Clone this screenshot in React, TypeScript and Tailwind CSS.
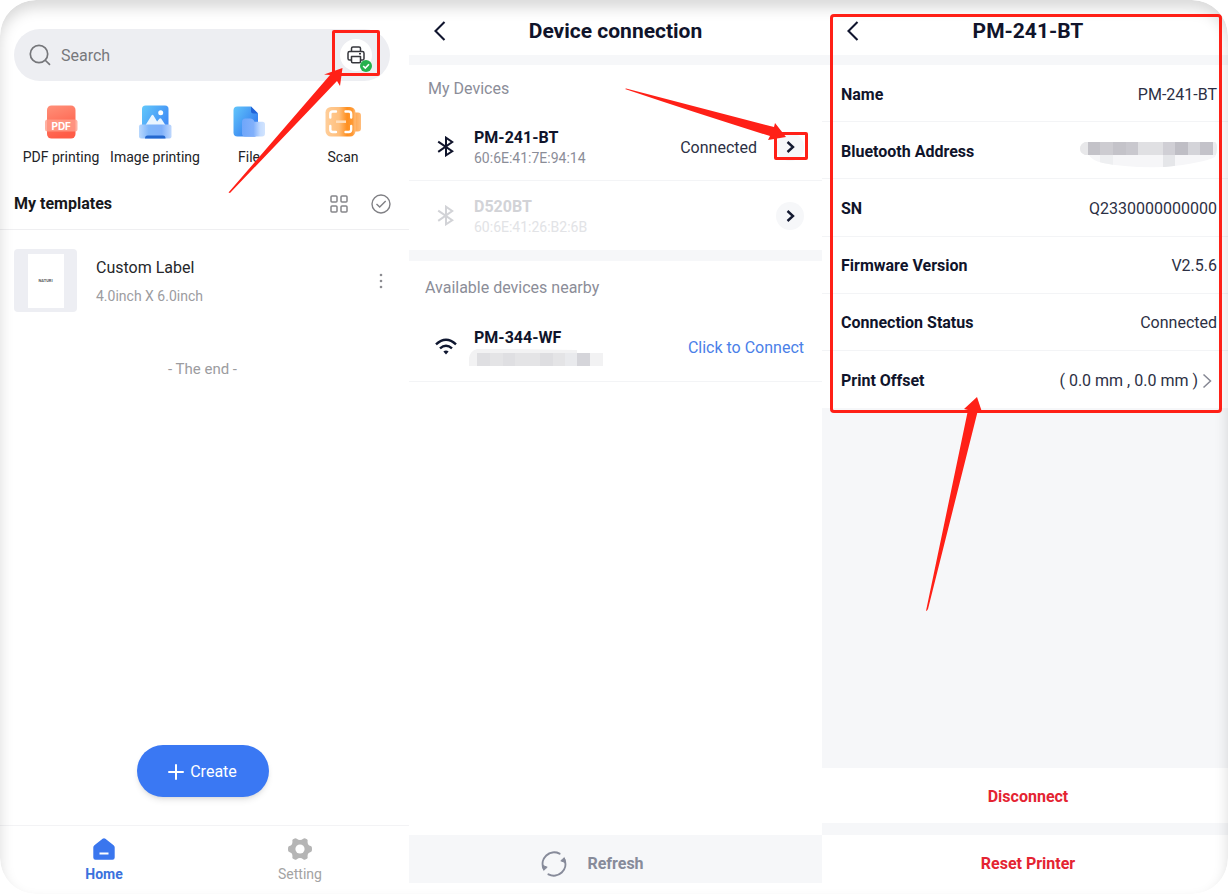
import { useState } from 'react';
import type { ReactNode } from 'react';

const details = [
  { label: 'Name', value: 'PM-241-BT' },
  { label: 'Bluetooth Address', value: null },
  { label: 'SN', value: 'Q2330000000000' },
  { label: 'Firmware Version', value: 'V2.5.6' },
  { label: 'Connection Status', value: 'Connected' },
];

function SearchIcon() {
  return (
    <svg width="22" height="22" viewBox="0 0 22 22" fill="none" stroke="#75767a" strokeWidth="1.7">
      <circle cx="10" cy="10" r="8.7" />
      <path d="m16.5 16.5 4 3.8" strokeLinecap="round" />
    </svg>
  );
}

function PrinterIcon() {
  return (
    <svg width="18" height="18" viewBox="0 0 18 18" fill="none" stroke="#36373c" strokeWidth="1.5" strokeLinejoin="round">
      <path d="M4.5 5.5V2.6Q4.5 1 6 1h6q1.5 0 1.5 1.6v2.9" />
      <path d="M4.5 14H2.6Q1 14 1 12.400V7.2Q1 5.5 2.7 5.5h12.600Q17 5.5 17 7.2v5.2q0 1.6-1.6 1.6h-1.9" />
      <path d="M4.5 10.5h9v5q0 1.200-1.200 1.200H5.700q-1.200 0-1.200-1.200z" />
      <path d="M12 7.800h2" />
    </svg>
  );
}

function CheckBadge() {
  return (
    <svg width="12" height="12" viewBox="0 0 12 12" fill="none">
      <circle cx="6" cy="6" r="6" fill="#26b14c" />
      <path d="m3.2 6 2.1 2.1 3.700-3.900" stroke="#fff" strokeWidth="1.6" />
    </svg>
  );
}

function PdfIcon() {
  return (
    <svg width="34" height="34" viewBox="0 0 34 34">
      <defs>
        <linearGradient id="pdf" x1="0" y1="0" x2="0.3" y2="1">
          <stop offset="0" stopColor="#ff9079" />
          <stop offset="1" stopColor="#ff5c47" />
        </linearGradient>
      </defs>
      <rect x="3" y="0.5" width="28.5" height="33" rx="4.5" fill="url(#pdf)" />
      <rect x="1" y="14.5" width="32.5" height="12" rx="2.5" fill="#ff9e8b" fillOpacity="0.8" />
      <text x="17.2" y="24.5" textAnchor="middle" fontFamily="Inter, sans-serif" fontWeight="700" fontSize="10" fill="#fff">
        PDF
      </text>
    </svg>
  );
}

function ImageIcon() {
  return (
    <svg width="34" height="34" viewBox="0 0 34 34">
      <defs>
        <linearGradient id="img" x1="0" y1="0" x2="1" y2="0.7">
          <stop offset="0" stopColor="#62c8fb" />
          <stop offset="1" stopColor="#3d86f4" />
        </linearGradient>
        <linearGradient id="tray" x1="0" y1="0" x2="1" y2="0">
          <stop offset="0" stopColor="#b9d8fd" />
          <stop offset="0.3" stopColor="#7fb6fa" />
          <stop offset="0.7" stopColor="#7fb0fa" />
          <stop offset="1" stopColor="#bfd8fd" />
        </linearGradient>
      </defs>
      <rect x="4" y="0.5" width="26.5" height="31" rx="3.5" fill="url(#img)" />
      <path d="m7 21 6.5-10.5q1-1.3 2 0l3.6 6 2.2-2.7q1-1 2 0L28 21z" fill="#e9f5ff" />
      <circle cx="22.7" cy="7.7" r="2.5" fill="#fff" />
      <path d="M1 21.5q0-2 2-2h28q2.5 0 2.5 2v10q0 2-2 2H3q-2 0-2-2z" fill="url(#tray)" />
      <path d="M7 33.5q0-3 2.5-3h15.5q2.5 0 2.5 3z" fill="#2468cf" />
    </svg>
  );
}

function FileIcon() {
  return (
    <svg width="34" height="34" viewBox="0 0 34 34">
      <defs>
        <linearGradient id="file" x1="0" y1="0" x2="1" y2="0.8">
          <stop offset="0" stopColor="#62c6fb" />
          <stop offset="1" stopColor="#2f74ee" />
        </linearGradient>
        <linearGradient id="folder" x1="0" y1="0" x2="1" y2="0">
          <stop offset="0" stopColor="#6fa6fa" />
          <stop offset="0.5" stopColor="#81b0fb" />
          <stop offset="0.8" stopColor="#c5dcfe" />
          <stop offset="1" stopColor="#d2e4fe" />
        </linearGradient>
      </defs>
      <path d="M1.5 5.5q0-4 4-4H19l7 7v19q0 4-4 4H5.5q-4 0-4-4z" fill="url(#file)" />
      <path d="M19 1.5v4.5q0 2.500 2.500 2.500H26z" fill="#2263d8" />
      <path d="M10 17q0-3.500 3.500-3.500h5q2 0 3 1.500l1 1.700h8q2.500 0 2.500 2.500v9.300q0 3-3 3H13q-3 0-3-3z" fill="url(#folder)" />
    </svg>
  );
}

function ScanIcon() {
  return (
    <svg width="36" height="34" viewBox="0 0 36 34">
      <defs>
        <linearGradient id="scan" x1="0" y1="0" x2="1" y2="0">
          <stop offset="0" stopColor="#ffce9a" />
          <stop offset="0.45" stopColor="#ffbf7c" />
          <stop offset="0.72" stopColor="#ff8f1f" />
          <stop offset="0.9" stopColor="#ff9a35" />
          <stop offset="1" stopColor="#ffbe7d" />
        </linearGradient>
        <linearGradient id="scanTab" x1="0" y1="0" x2="1" y2="0">
          <stop offset="0" stopColor="#ff8c1c" />
          <stop offset="1" stopColor="#ffbd7c" />
        </linearGradient>
      </defs>
      <rect x="22" y="7.5" width="14" height="19" rx="3" fill="url(#scanTab)" />
      <rect x="0.5" y="2" width="30" height="29.5" rx="5.5" fill="url(#scan)" />
      <g fill="none" stroke="#fff" strokeWidth="2.4" strokeLinecap="round">
        <path d="M5.3 12.500V9q0-2.500 2.500-2.500H11M20.500 6.500h3.200q2.500 0 2.500 2.500v3.500M26.200 21v3.500q0 2.500-2.500 2.500h-3.200M11 27H7.800q-2.500 0-2.500-2.500V21" />
      </g>
      <path d="M11 16.700h10" stroke="#ffdfbd" strokeWidth="2.5" />
    </svg>
  );
}

function GridIcon() {
  return (
    <svg width="18" height="18" viewBox="0 0 18 18" fill="none" stroke="#86868a" strokeWidth="1.5">
      <rect x="1" y="1" width="6" height="6" rx="1" />
      <rect x="11" y="1" width="6" height="6" rx="1" />
      <rect x="1" y="11" width="6" height="6" rx="1" />
      <rect x="11" y="11" width="6" height="6" rx="1" />
    </svg>
  );
}

function SelectIcon() {
  return (
    <svg width="20" height="20" viewBox="0 0 20 20" fill="none" stroke="#808085" strokeWidth="1.4">
      <circle cx="10" cy="10" r="9" />
      <path d="m5.5 10 3.2 3 6-6" />
    </svg>
  );
}

function BluetoothIcon() {
  return (
    <svg width="17" height="21" viewBox="0 0 17 21" fill="none" stroke="currentColor" strokeWidth="2">
      <path d="m1.200 5.600 14 9.700L9 19.300V1.700l6.200 4.300L1.200 15.900" />
    </svg>
  );
}

function WifiIcon() {
  return (
    <svg width="22" height="17" viewBox="0 0 22 17" fill="none" stroke="#0f1730">
      <path d="M1 6.300Q11-3 21 6.300" strokeWidth="2.4" />
      <path d="M5 10.400q6-5.400 12 0" strokeWidth="2.4" />
      <path d="M8.400 13.600q2.600-2 5.200 0L11 16.600z" fill="#0f1730" stroke="none" />
    </svg>
  );
}

function BackIcon() {
  return (
    <svg width="12" height="20" viewBox="0 0 12 20" fill="none" stroke="#10152e" strokeWidth="2.1">
      <path d="m10.5 1-9 9 9 9" />
    </svg>
  );
}

function ChevronIcon() {
  return (
    <svg width="9" height="12" viewBox="0 0 9 12" fill="none" stroke="#141a31" strokeWidth="2.4">
      <path d="m1.5 1 5.5 5-5.5 5" />
    </svg>
  );
}

function HomeIcon() {
  return (
    <svg width="22" height="22" viewBox="0 0 22 22">
      <path d="M9.600.8q1.400-1.200 2.800 0l8.200 6.500q1.100.9 1.100 2.200v10q0 2.200-2.200 2.200H2.500Q.3 21.700.3 19.500v-10q0-1.300 1.100-2.200z" fill="#3a76ee" />
      <path d="M6.500 15.500h9" stroke="#fff" strokeWidth="2.2" />
    </svg>
  );
}

function GearIcon() {
  return (
    <svg width="24" height="22" viewBox="0 0 24 22">
      <path
        d="M6.600.4q1.200-.6 2.200.4 1.500 1.200 3.200 1.200t3.200-1.200q1-1 2.200-.4l1.500.8q1 .6.700 1.900-.2 2 .6 3.300.8 1.200 2.500 1.700 1 .3 1.200 1.400l.1 1.500-.1 1.500q-.2 1.100-1.200 1.400-1.700.5-2.500 1.700-.8 1.300-.6 3.300.3 1.300-.7 1.900l-1.500.8q-1.200.6-2.200-.4-1.500-1.200-3.200-1.200t-3.200 1.200q-1 1-2.200.4l-1.500-.8q-1-.6-.7-1.900.2-2-.6-3.300-.8-1.200-2.500-1.700-1-.3-1.200-1.400L0 11l.1-1.500q.2-1.100 1.200-1.400Q3 7.600 3.800 6.400q.8-1.300.6-3.300-.3-1.300.7-1.900z"
        fill="#b5b5b5"
      />
      <circle cx="12" cy="11" r="4.6" fill="#fff" />
    </svg>
  );
}

function RefreshIcon() {
  return (
    <svg width="26" height="26" viewBox="0 0 26 26" fill="none" stroke="#878b9a" strokeWidth="2" strokeLinecap="round">
      <path d="M18.500 2.700A11.500 11.500 0 0 0 2.600 17.500" />
      <path d="M7.500 23.300A11.500 11.500 0 0 0 23.400 8.500" />
      <path d="m1.900 14.500 4.300 1.700-3.200 2.900zM24.100 11.500l-4.300-1.700L23 6.900z" fill="#878b9a" strokeWidth="1" strokeLinejoin="round" />
    </svg>
  );
}

// address hidden behind a mosaic
function AddressMosaic() {
  return (
    <svg className="mt-1.5" width="137" height="26" viewBox="0 0 137 26" role="img" aria-label="Hidden Bluetooth address">
      <defs>
        <clipPath id="addressShape">
          <path d="M5 0h130q2 1 2 6t-2 9q-12 6-50 10-40 1-62-4-12-3-14-8H5q-5-2-5-6.500T5 0z" />
        </clipPath>
      </defs>
      <g clipPath="url(#addressShape)">
        <rect width="137" height="26" fill="#f6f6f8" />
        <rect width="8" height="13" fill="#e8e8ea" />
        <rect x="8" width="12" height="13" fill="#c3c2c8" />
        <rect x="20" width="13" height="13" fill="#cdccd1" />
        <rect x="33" width="13" height="13" fill="#c4c3c9" />
        <rect x="46" width="12" height="13" fill="#c9c8ce" />
        <rect x="58" width="25" height="13" fill="#e0e0e3" />
        <rect x="83" width="12" height="13" fill="#d0cfd5" />
        <rect x="95" width="13" height="13" fill="#bfbec5" />
        <rect x="108" width="12" height="13" fill="#d4d4d9" />
        <rect x="120" width="13" height="13" fill="#c3c2c9" />
        <rect x="133" width="4" height="13" fill="#ececee" />
        <rect x="20" y="13" width="13" height="13" fill="#eeeff1" />
        <rect x="83" y="13" width="12" height="13" fill="#e5e6e9" />
      </g>
    </svg>
  );
}

function NearbyMosaic() {
  return (
    <svg width="134" height="18" viewBox="0 0 134 18" role="img" aria-label="Hidden device address">
      <path d="M0 18V10q1-7 8-9h26l74 1v3h26v13z" fill="#f2f2f3" />
      <path d="M8 5h100v13H8z" fill="#e4e4e6" />
      <path d="M8 5h13v13H8zM34 5h12v13H34z" fill="#dfdfe2" />
      <path d="M71 5h13v13H71z" fill="#dedee1" />
      <path d="M96 5h12v13H96z" fill="#e9eaed" />
      <path d="M108 5h13v13h-13z" fill="#d5d5da" />
    </svg>
  );
}

function Shortcut({ icon, label }: { icon: ReactNode; label: string }) {
  return (
    <button type="button" className="flex flex-col items-center gap-1.5 whitespace-nowrap text-sm leading-6 text-[#222327]">
      {icon}
      {label}
    </button>
  );
}

function ScreenHeader({ title, titleClass = '' }: { title: string; titleClass?: string }) {
  return (
    <header className="grid h-[65px] shrink-0 grid-cols-[37px_1fr_37px] items-center border-b-[10px] border-[#f6f7f9] pt-1.5">
      <button type="button" aria-label="Back" className="flex justify-end">
        <BackIcon />
      </button>
      <h1 className={`text-center text-[21px] font-bold leading-7 text-[#10142b] ${titleClass}`}>{title}</h1>
    </header>
  );
}

function HomeScreen() {
  const [query, setQuery] = useState('');

  return (
    <section className="flex flex-col">
      <div className="relative ml-3.5 mr-[19px] mt-[29px] flex h-[52px] items-center gap-2.5 rounded-full bg-[#edeef2] pl-[15px] pr-[18px]">
        <SearchIcon />
        <input
          type="search"
          aria-label="Search"
          placeholder="Search"
          className="min-w-0 flex-1 bg-transparent pt-0.5 text-base text-[#222327] outline-none placeholder:text-[#77787c]"
          value={query}
          onChange={(e) => setQuery(e.target.value)}
        />
        <button type="button" aria-label="Printer" className="relative flex size-8 items-center justify-center rounded-full bg-white">
          <PrinterIcon />
          <span className="absolute -bottom-px right-0">
            <CheckBadge />
          </span>
        </button>
        <span className="pointer-events-none absolute right-2.5 top-px h-[46px] w-12 rounded-xs border-[3px] border-[#ff2017]" />
        <svg className="pointer-events-none absolute right-[47px] top-[38px] z-10" width="115" height="127" viewBox="0 0 115 127" fill="#ff2017">
          <path d="M.5 125.500 102 8l-6-.500L114.500 1 112 19l-3-5L2 126z" />
        </svg>
      </div>

      <div className="ml-3.5 mr-[19px] mt-6 grid grid-cols-4">
        <Shortcut icon={<PdfIcon />} label="PDF printing" />
        <Shortcut icon={<ImageIcon />} label="Image printing" />
        <Shortcut icon={<FileIcon />} label="File" />
        <Shortcut icon={<ScanIcon />} label="Scan" />
      </div>

      <div className="flex h-[61px] items-center gap-[23px] border-b border-[#efeff1] pl-3.5 pr-[18px] pt-2.5">
        <h2 className="flex-1 text-base font-bold text-[#17181b]">My templates</h2>
        <button type="button" aria-label="Grid view">
          <GridIcon />
        </button>
        <button type="button" aria-label="Select templates">
          <SelectIcon />
        </button>
      </div>

      <div className="mt-[19px] flex items-center pl-3.5 pr-6">
        <div className="flex size-[63px] items-center justify-center rounded bg-[#edeef3]">
          <div className="flex h-[54px] w-9 items-center justify-center bg-white text-[4px] font-bold text-[#55565a]">NATURI</div>
        </div>
        <div className="ml-[19px] flex-1 pt-0.5">
          <h3 className="text-base leading-7 text-[#26272a]">Custom Label</h3>
          <p className="text-sm leading-7 text-[#9c9c9f]">4.0inch X 6.0inch</p>
        </div>
        <button type="button" aria-label="More options">
          <svg width="8" height="16" viewBox="0 0 8 16" fill="#8c8c91">
            <circle cx="4" cy="2" r="1.3" />
            <circle cx="4" cy="8" r="1.3" />
            <circle cx="4" cy="14" r="1.3" />
          </svg>
        </button>
      </div>

      <p className="mr-1 mt-[45px] text-center text-[15px] leading-6 text-[#9c9c9f]">- The end -</p>

      <button
        type="button"
        className="mb-7 mr-1 mt-auto flex h-[52px] w-[132px] items-center justify-center gap-1.5 self-center rounded-full bg-[#3a78f3] pt-0.5 text-base text-white shadow-md"
      >
        <svg width="16" height="16" viewBox="0 0 16 16" stroke="currentColor" strokeWidth="2" strokeLinecap="round">
          <path d="M8 1v14M1 8h14" />
        </svg>
        Create
      </button>

      <nav className="grid h-[69px] grid-cols-2 border-t border-[#f3f3f5] pl-1.5 pr-[11px] pt-3 text-sm">
        <a href="#home" className="flex flex-col items-center gap-1 font-bold text-[#3b72dd]">
          <HomeIcon />
          Home
        </a>
        <a href="#setting" className="flex flex-col items-center gap-1 text-[#a3a3a3]">
          <GearIcon />
          Setting
        </a>
      </nav>
    </section>
  );
}

function ConnectionScreen() {
  return (
    <section className="flex flex-col">
      <ScreenHeader title="Device connection" />

      <h2 className="mt-3 pl-[19px] text-base leading-6 text-[#8b8d98]">My Devices</h2>
      <ul>
        <li className="mt-3 flex h-[68px] items-center border-b border-[#f3f4f6] pl-7 pr-[18px] text-[#10142b]">
          <BluetoothIcon />
          <div className="ml-5 flex-1 pt-[3px]">
            <h3 className="text-base font-bold leading-5">PM-241-BT</h3>
            <p className="text-sm leading-5 text-[#8b8d98]">60:6E:41:7E:94:14</p>
          </div>
          <span className="mr-[19px] pt-0.5 text-base text-[#2c3044]">Connected</span>
          <button type="button" aria-label="PM-241-BT details" className="relative flex size-7 items-center justify-center rounded-full bg-[#f6f7f9]">
            <ChevronIcon />
            <span className="pointer-events-none absolute -left-0.5 -right-1 -top-px h-7 rounded-xs border-[3px] border-[#ff2017]" />
            <svg className="pointer-events-none absolute bottom-[18px] right-4" width="164" height="56" viewBox="0 0 164 56" fill="#ff2017">
              <path d="M1 2Q2 1 4 2l146 38 1-4 11 14-18 3 2-4Q75 27 1 2z" />
            </svg>
          </button>
        </li>
        <li className="flex h-[69px] items-center pl-7 pr-[18px] text-[#d2d3d7]">
          <BluetoothIcon />
          <div className="ml-5 flex-1 pt-[3px]">
            <h3 className="text-base font-bold leading-5">D520BT</h3>
            <p className="text-sm leading-5 text-[#e2e3e6]">60:6E:41:26:B2:6B</p>
          </div>
          <button type="button" aria-label="D520BT details" className="flex size-7 items-center justify-center rounded-full bg-[#f6f7f9]">
            <ChevronIcon />
          </button>
        </li>
      </ul>

      <div className="h-[11px] bg-[#f6f7f9]" />

      <h2 className="mt-[15px] pl-4 text-base leading-6 text-[#8b8d98]">Available devices nearby</h2>
      <div className="mt-3 flex h-[70px] items-center border-b border-[#f3f4f6] pl-[26px] pr-[18px]">
        <WifiIcon />
        <div className="ml-3 flex-1">
          <h3 className="pl-[5px] text-base font-bold leading-5 text-[#10142b]">PM-344-WF</h3>
          <NearbyMosaic />
        </div>
        <button type="button" className="pt-0.5 text-base text-[#4a80e8]">
          Click to Connect
        </button>
      </div>

      <button type="button" className="mb-[11px] mt-auto flex h-12 items-center justify-center gap-5 bg-[#f6f7f9] pr-[46px] pt-2.5 text-base font-bold text-[#878b9a]">
        <RefreshIcon />
        Refresh
      </button>
    </section>
  );
}

function DeviceScreen() {
  return (
    <section className="relative flex flex-col">
      <ScreenHeader title="PM-241-BT" titleClass="pl-1.5" />

      <dl className="grid min-h-[343px] auto-rows-fr divide-y divide-[#f3f4f6] text-base text-[#10142b]">
        {details.map((item) => (
          <div key={item.label} className="flex items-center justify-between pl-[19px] pr-[11px] pt-[3px]">
            <dt className="font-bold">{item.label}</dt>
            <dd className="text-[#2c3044]">{item.value ?? <AddressMosaic />}</dd>
          </div>
        ))}
        <div className="flex items-center justify-between pl-[19px] pr-[11px] pt-[3px]">
          <dt className="font-bold">Print Offset</dt>
          <dd>
            <button type="button" className="flex items-center gap-1 pr-[5px] text-[#2c3044]">
              ( 0.0 mm , 0.0 mm )
              <svg width="10" height="16" viewBox="0 0 10 16" fill="none" stroke="#858793" strokeWidth="1.5">
                <path d="m1.5 1.500 7 6.500-7 6.500" />
              </svg>
            </button>
          </dd>
        </div>
      </dl>

      <div className="flex-1 bg-[#f6f7f9]" />
      <button type="button" className="h-[55px] pl-1.5 pt-0.5 text-base font-bold text-[#e42432]">
        Disconnect
      </button>
      <div className="h-3 bg-[#f6f7f9]" />
      <button type="button" className="mb-[11px] h-12 pl-1.5 pt-2.5 text-base font-bold text-[#e42432]">
        Reset Printer
      </button>

      <span className="pointer-events-none absolute left-2 right-1.5 top-3.5 z-20 h-[399px] rounded-sm border-[3px] border-[#ff2017]" />
      <svg className="pointer-events-none absolute left-[103px] top-[396px] z-20" width="58" height="216" viewBox="0 0 58 216" fill="#ff2017">
        <path d="M1 215 43 14l-4-1L52 1l5 15-4-2L3 213q-1 2-2 2z" />
      </svg>
    </section>
  );
}

export default function App() {
  return (
    <main className="relative grid min-h-screen grid-cols-[409fr_413fr_406fr] overflow-hidden rounded-[36px] bg-white font-[Roboto,'Liberation_Sans',sans-serif]">
      <HomeScreen />
      <ConnectionScreen />
      <DeviceScreen />
      <div className="pointer-events-none absolute inset-0 z-10 rounded-[36px] shadow-[inset_0_8px_14px_rgba(0,0,0,0.15)]" />
    </main>
  );
}
